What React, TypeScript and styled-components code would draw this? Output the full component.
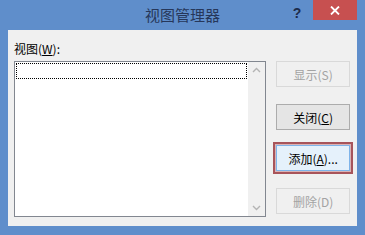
import styled, { createGlobalStyle } from 'styled-components'

const GlobalStyle = createGlobalStyle`
  html, body {
    margin: 0;
    padding: 0;
    background: #5f8ecb;
  }
  body {
    font-family: "Noto Sans CJK SC", "Noto Sans", "Liberation Sans", sans-serif;
  }
`

const Window = styled.div`
  width: 365px;
  height: 235px;
  background: #5f8ecb;
  display: flex;
  flex-direction: column;
  box-sizing: border-box;
`

const TitleBar = styled.div`
  height: 30px;
  display: grid;
  grid-template-columns: 1fr auto 1fr;
  align-items: start;
`

const Title = styled.div`
  grid-column: 2;
  font-size: 15px;
  line-height: 30px;
  color: #26375a;
`

const Controls = styled.div`
  grid-column: 3;
  justify-self: end;
  display: flex;
  align-items: flex-start;
  margin-right: 8px;
`

const HelpButton = styled.div`
  width: 26px;
  height: 20px;
  margin-right: 3px;
  display: flex;
  align-items: center;
  justify-content: center;
  font-family: "Liberation Sans", sans-serif;
  font-weight: bold;
  font-size: 14px;
  color: #1c2b4a;
  padding-top: 3px;
`

const CloseButton = styled.div`
  width: 44px;
  height: 20px;
  background: #c75050;
  display: flex;
  align-items: center;
  justify-content: center;
`

const Body = styled.div`
  margin: 0 8px;
  height: 196px;
  background: #f0f0f0;
  box-sizing: border-box;
  padding: 11px 7px 9px 6px;
  display: flex;
  gap: 10px;
`

const LeftColumn = styled.div`
  display: flex;
  flex-direction: column;
  width: 253px;
`

const Label = styled.div`
  font-size: 12px;
  line-height: 16px;
  height: 16px;
  margin-bottom: 4px;
  color: #000;
  u {
    text-decoration: underline;
    text-underline-offset: 1px;
  }
`

const ListBox = styled.div`
  height: 156px;
  border: 1px solid #828790;
  background: #fff;
  box-sizing: border-box;
  display: flex;
`

const ListArea = styled.div`
  flex: 1;
  padding: 1px 1px;
`

const FocusRow = styled.div`
  height: 16px;
  border: 1px dotted #000;
  box-sizing: border-box;
`

const ScrollBar = styled.div`
  width: 17px;
  background: #f0f0f0;
  display: flex;
  flex-direction: column;
  justify-content: space-between;
  align-items: center;
  padding: 5px 0;
`

const ButtonColumn = styled.div`
  display: flex;
  flex-direction: column;
  padding-top: 20px;
  width: 74px;
`

const Button = styled.div<{ $disabled?: boolean; $focused?: boolean; $gap: number }>`
  height: 26px;
  margin-bottom: ${(p) => p.$gap}px;
  box-sizing: border-box;
  display: flex;
  align-items: center;
  justify-content: center;
  font-size: 12px;
  color: ${(p) => (p.$disabled ? '#a3a3a3' : '#000')};
  border: 1px solid ${(p) => (p.$disabled ? '#d9d9d9' : p.$focused ? '#7eb4ea' : '#acacac')};
  background: ${(p) => (p.$disabled ? '#f0f0f0' : p.$focused ? '#e5f1fb' : '#e5e5e5')};
  box-shadow: ${(p) => (p.$focused ? '0 0 0 1px #d9b3b5, 0 0 0 3px #a8545a' : 'none')};
  u {
    text-decoration: underline;
    text-underline-offset: 1px;
  }
`

const Chevron = ({ up }: { up?: boolean }) => (
  <svg width="9" height="6" viewBox="0 0 9 6">
    <path
      d={up ? 'M1 5 L4.5 1.5 L8 5' : 'M1 1 L4.5 4.5 L8 1'}
      fill="none"
      stroke="#b4b4b4"
      strokeWidth="1.4"
    />
  </svg>
)

const App = () => {
  return (
    <>
      <GlobalStyle />
      <Window>
        <TitleBar>
          <Title>视图管理器</Title>
          <Controls>
            <HelpButton>?</HelpButton>
            <CloseButton>
              <svg width="10" height="9" viewBox="0 0 10 9">
                <path d="M1 0.5 L9 8.5 M9 0.5 L1 8.5" stroke="#fff" strokeWidth="1.8" />
              </svg>
            </CloseButton>
          </Controls>
        </TitleBar>
        <Body>
          <LeftColumn>
            <Label>
              视图(<u>W</u>):
            </Label>
            <ListBox>
              <ListArea>
                <FocusRow />
              </ListArea>
              <ScrollBar>
                <Chevron up />
                <Chevron />
              </ScrollBar>
            </ListBox>
          </LeftColumn>
          <ButtonColumn>
            <Button $disabled $gap={17}>显示(S)</Button>
            <Button $gap={15}>
              关闭(<u>C</u>)
            </Button>
            <Button $focused $gap={17}>
              添加(<u>A</u>)...
            </Button>
            <Button $disabled $gap={0}>删除(D)</Button>
          </ButtonColumn>
        </Body>
      </Window>
    </>
  )
}

export default App
